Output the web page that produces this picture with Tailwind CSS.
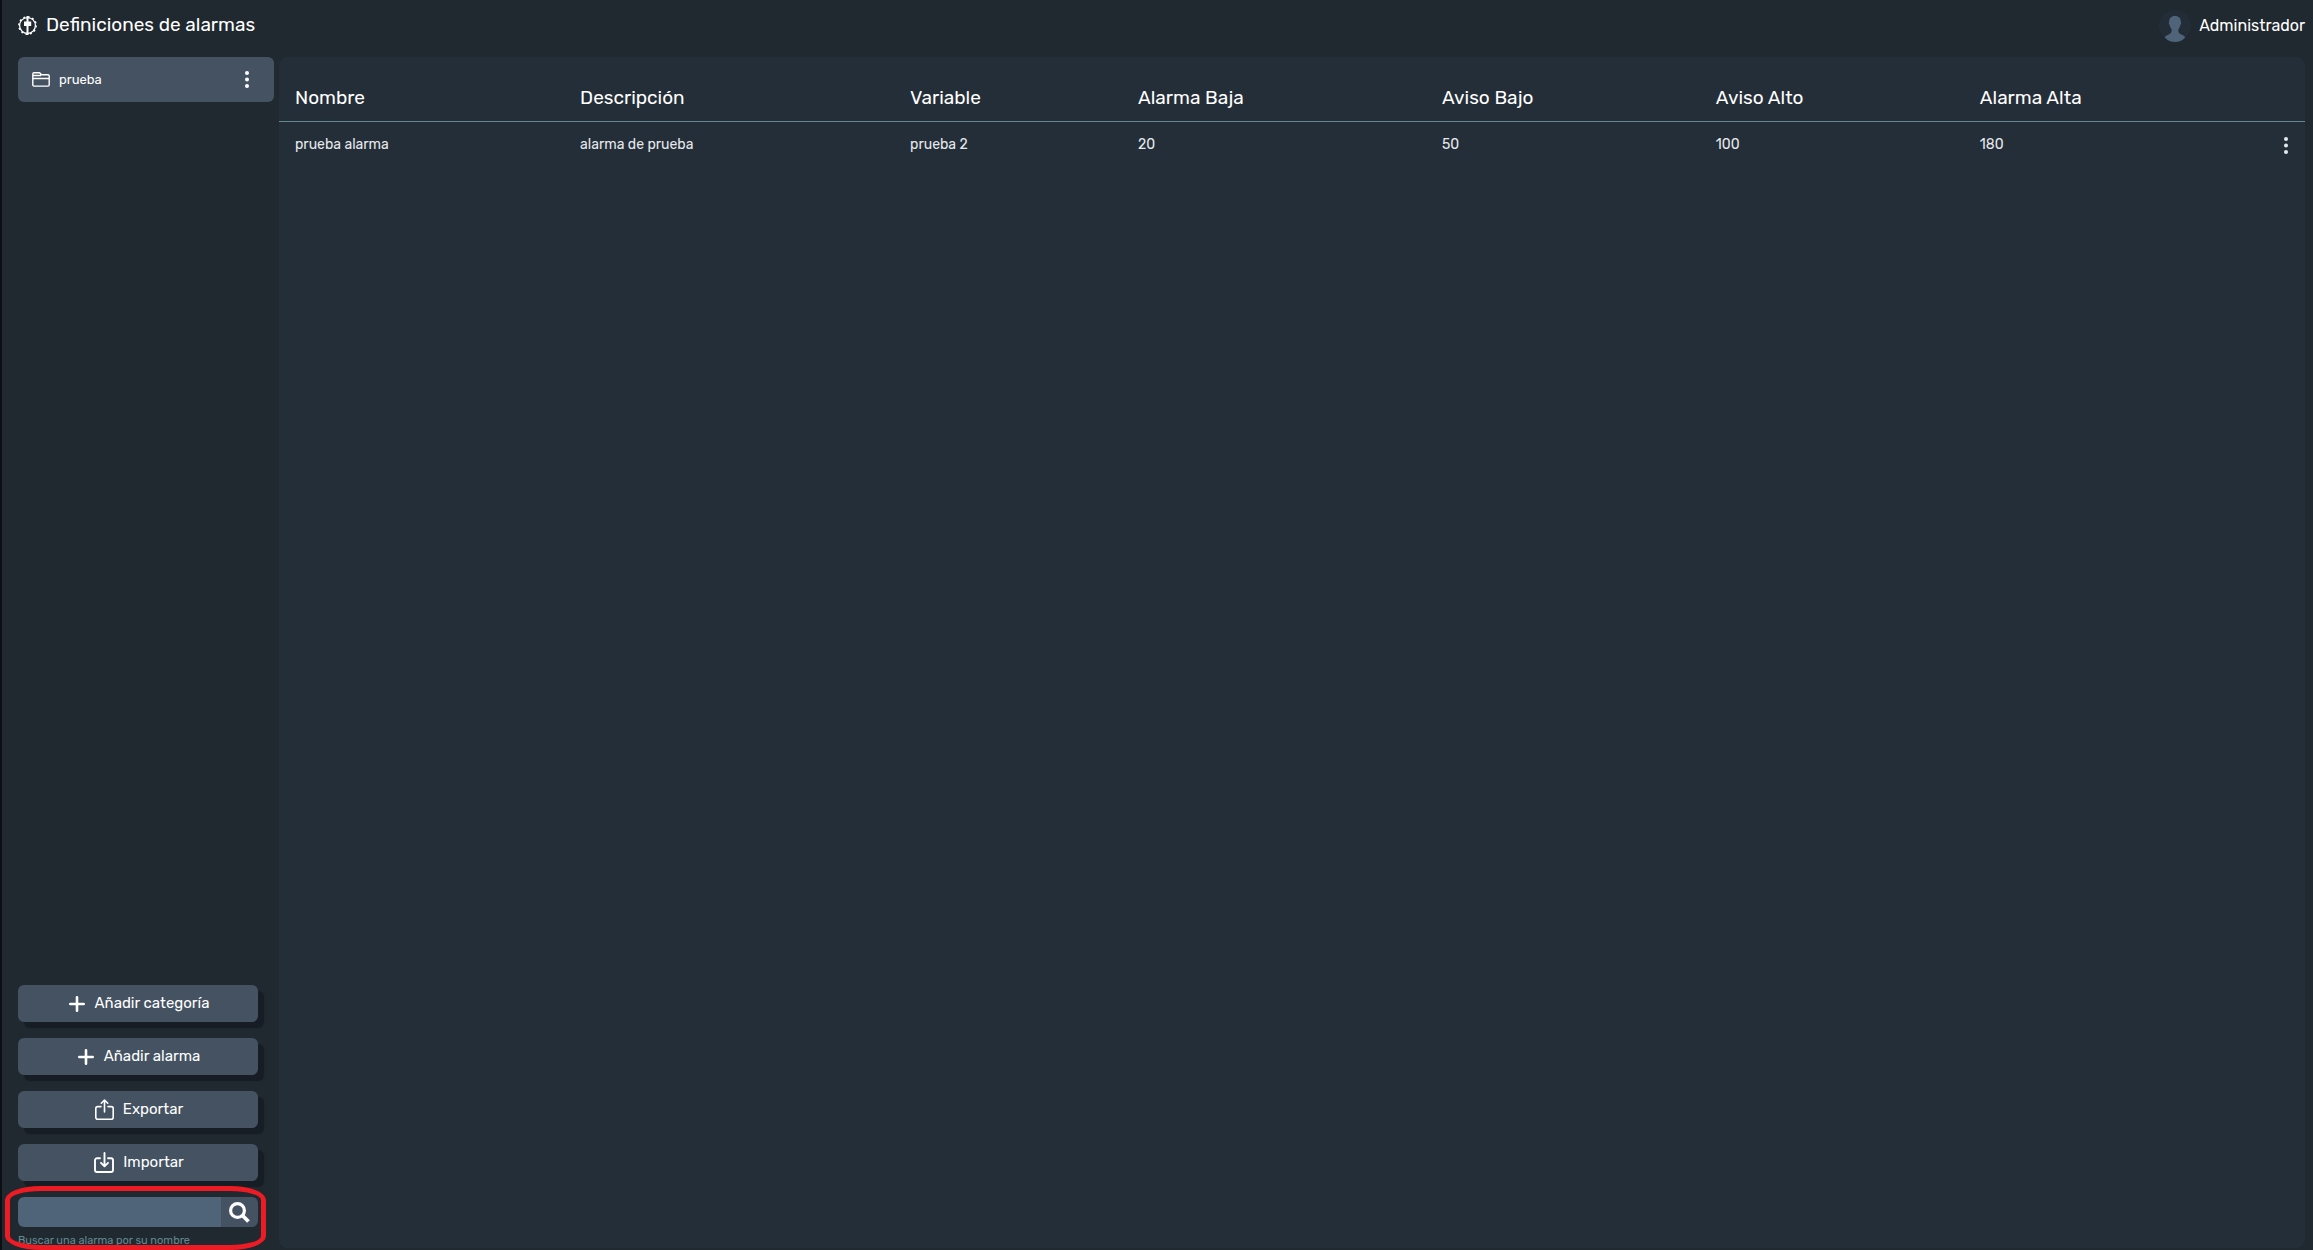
<!DOCTYPE html>
<html lang="es">
<head>
<meta charset="utf-8">
<title>Definiciones de alarmas</title>
<script src="https://cdn.jsdelivr.net/npm/@tailwindcss/browser@4"></script>
</head>
<body class="flex h-screen flex-col overflow-hidden border-l-2 border-[#0b0f13] bg-[#202830] font-['Rubik','Roboto',sans-serif] text-white">
  <header class="flex h-[57px] shrink-0 items-start justify-between pt-2 pr-2 pl-4">
    <h1 class="flex h-[34px] items-center gap-[9px] text-[19px]">
      <svg class="size-[19px]" viewBox="0 0 19 19" fill="none" stroke="#fff" aria-hidden="true">
        <circle cx="9.5" cy="9.5" r="7.9" stroke-width="1.3"/>
        <circle cx="9.5" cy="9.5" r="8.7" stroke-width="1.4" stroke-dasharray="2 2.555"/>
        <path d="M9.500 0v19" stroke-width="2"/>
        <path d="M6 5.500h7.200v4.500H6z" fill="#fff" stroke="none"/>
      </svg>
      Definiciones de alarmas
    </h1>
    <div class="flex h-[35px] items-center gap-2 text-base">
      <svg class="size-8" viewBox="0 0 32 32" aria-hidden="true">
        <circle cx="16" cy="16" r="16" fill="#232d38"/>
        <path d="M16 6c-4 0-6 2.600-5.800 6-.7.300-.4 2.500.5 3 .3 2 1 3.200 2 4.200 0 2.800-.4 4-2.600 5-2 .9-3.300 1.400-4.300 3.300C8.500 30.600 12 32 16 32s7.500-1.400 10.200-4.500c-1-1.900-2.300-2.400-4.300-3.300-2.200-1-2.600-2.200-2.600-5 1-1 1.700-2.200 2-4.200.9-.5 1.200-2.700.5-3C22 8.600 20 6 16 6z" fill="#4f6478"/>
      </svg>
      Administrador
    </div>
  </header>

  <div class="flex min-h-0 flex-1 gap-[5px] pr-2 pl-4">
    <aside class="flex w-64 shrink-0 flex-col justify-between">
      <nav class="flex h-[45px] items-center rounded-md bg-[#445262] pr-[19px] pl-3.5">
        <a href="#" class="flex flex-1 items-center gap-[9px] text-[13px]">
          <svg class="h-[15px] w-[18px]" viewBox="0 0 18 15" fill="none" stroke="#fff" stroke-width="1.4" aria-hidden="true">
            <path d="M.8 12.500V2.200C.8 1.400 1.200.8 2 .8h5.200c.8 0 1 .5 1.500 1.200.4.600.8.800 1.500.8h5.800c.8 0 1.200.5 1.200 1.200v8.800c0 .8-.5 1.300-1.200 1.300H2c-.8 0-1.200-.6-1.200-1.600zM1 3.500h8M1 6.500h16"/>
          </svg>
          prueba
        </a>
        <button aria-label="Opciones de prueba" class="flex w-4 justify-center">
          <svg class="h-[17px] w-1" viewBox="0 0 4 17" fill="#fff"><circle cx="2" cy="2" r="2"/><circle cx="2" cy="8.500" r="2"/><circle cx="2" cy="15" r="2"/></svg>
        </button>
      </nav>

      <div class="flex w-60 flex-col gap-4 text-[15px]">
        <button class="flex h-[37px] items-center justify-center gap-2.5 rounded-md bg-[#445262] pl-0.5 shadow-[6px_6px_1px_#161d24]">
          <svg class="size-4" viewBox="0 0 16 16" fill="none" stroke="#fff" stroke-width="2.600" stroke-linecap="round" aria-hidden="true"><path d="M8 1.300v13.400M1.300 8h13.400"/></svg>
          Añadir categoría
        </button>
        <button class="flex h-[37px] items-center justify-center gap-2.5 rounded-md bg-[#445262] pl-0.5 shadow-[6px_6px_1px_#161d24]">
          <svg class="size-4" viewBox="0 0 16 16" fill="none" stroke="#fff" stroke-width="2.600" stroke-linecap="round" aria-hidden="true"><path d="M8 1.300v13.400M1.300 8h13.400"/></svg>
          Añadir alarma
        </button>
        <button class="flex h-[37px] items-center justify-center gap-[9px] rounded-md bg-[#445262] pl-0.5 shadow-[6px_6px_1px_#161d24]">
          <svg class="h-[21px] w-[19px]" viewBox="0 0 19 21" fill="none" stroke="#fff" stroke-width="1.600" stroke-linecap="round" stroke-linejoin="round" aria-hidden="true"><path d="M6 7.600H2.800a2 2 0 0 0-2 2v8.600a2 2 0 0 0 2 2h13.400a2 2 0 0 0 2-2V9.600a2 2 0 0 0-2-2H13M9.500 13V1M6.300 4.200 9.500 1l3.200 3.200"/></svg>
          Exportar
        </button>
        <button class="flex h-[37px] items-center justify-center gap-[9px] rounded-md bg-[#445262] pl-0.5 shadow-[6px_6px_1px_#161d24]">
          <svg class="h-[21px] w-5" viewBox="0 0 20 21" fill="none" stroke="#fff" stroke-width="1.900" stroke-linecap="round" stroke-linejoin="round" aria-hidden="true"><path d="M6 6.300H3a2 2 0 0 0-2 2V18a2 2 0 0 0 2 2h14a2 2 0 0 0 2-2V8.300a2 2 0 0 0-2-2h-3M10.500 1v13M7 10.800l3.500 3.500 3.500-3.500"/></svg>
          Importar
        </button>
        <form class="relative h-[53px]">
          <div class="flex h-[30px]">
            <input id="buscar" type="text" class="min-w-0 flex-1 rounded-l-md bg-[#4f6478] px-2 outline-none">
            <button type="button" aria-label="Buscar" class="flex w-[37px] items-center justify-center rounded-r-md bg-[#445262]">
              <svg class="size-[21px]" viewBox="0 0 21 21" fill="none" stroke="#fff" aria-hidden="true"><circle cx="8.500" cy="8.500" r="6.900" stroke-width="3.200"/><path d="m13.500 13.500 6 6" stroke-width="3.800"/></svg>
            </button>
          </div>
          <label for="buscar" class="block pt-1.5 text-[11px] leading-4 whitespace-nowrap text-[#628a90]">Buscar una alarma por su nombre</label>
          <!-- highlight around the search field -->
          <div class="pointer-events-none absolute -top-[11px] -right-2 bottom-0 -left-[13px] rounded-[36px/14px] border-5 border-[#ed1c24]"></div>
        </form>
      </div>
    </aside>

    <main class="mb-0.5 min-w-0 flex-1 rounded-lg bg-[#242e39]">
      <table class="w-full table-fixed text-left">
        <thead class="border-b border-[#628a90] text-[19px]">
          <tr class="h-16">
            <th class="w-[14.07%] px-4 pt-[18px] font-normal">Nombre</th>
            <th class="w-[16.29%] px-4 pt-[18px] font-normal">Descripción</th>
            <th class="w-[11.25%] px-4 pt-[18px] font-normal">Variable</th>
            <th class="w-[15%] px-4 pt-[18px] font-normal">Alarma Baja</th>
            <th class="w-[13.52%] px-4 pt-[18px] font-normal">Aviso Bajo</th>
            <th class="w-[13.03%] px-4 pt-[18px] font-normal">Aviso Alto</th>
            <th class="px-4 pt-[18px] font-normal">Alarma Alta</th>
            <td class="w-12"></td>
          </tr>
        </thead>
        <tbody class="text-sm text-[#e6e9ec]">
          <tr class="h-12">
            <td class="px-4">prueba alarma</td>
            <td class="px-4">alarma de prueba</td>
            <td class="px-4">prueba 2</td>
            <td class="px-4">20</td>
            <td class="px-4">50</td>
            <td class="px-4">100</td>
            <td class="px-4">180</td>
            <td class="pr-[17px]">
              <button aria-label="Opciones de prueba alarma" class="ml-auto block">
                <svg class="h-[17px] w-1" viewBox="0 0 4 17" fill="#e6e9ec"><circle cx="2" cy="2" r="2"/><circle cx="2" cy="8.500" r="2"/><circle cx="2" cy="15" r="2"/></svg>
              </button>
            </td>
          </tr>
        </tbody>
      </table>
    </main>
  </div>
</body>
</html>
